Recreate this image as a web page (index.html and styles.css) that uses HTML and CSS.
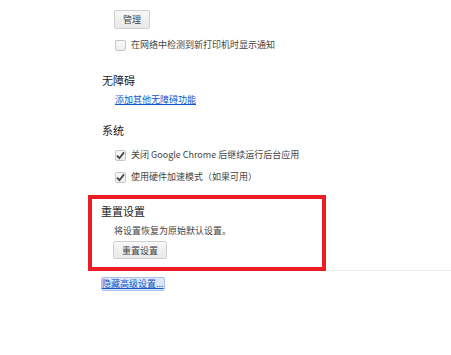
FILE: index.html
```html
<!DOCTYPE html>
<html>
<head>
  <meta charset="utf-8">
  <link rel="stylesheet" href="styles.css">
</head>
<body>
  <div class="page">
    <div class="section">
      <div class="items">
        <button class="btn">管理</button>
        <label class="check-row first-check">
          <span class="box"></span>
          <span>在网络中检测到新打印机时显示通知</span>
        </label>
      </div>
    </div>

    <div class="section">
      <h3 class="section-title a11y-title">无障碍</h3>
      <div class="items">
        <a href="#" class="link a11y-link">添加其他无障碍功能</a>
      </div>
    </div>

    <div class="section">
      <h3 class="section-title system-title">系统</h3>
      <div class="items">
        <label class="check-row row-2">
          <span class="box checked">
            <svg width="9" height="9" viewBox="0 0 9 9"><path d="M1 4.6 L3.4 7.2 L8 1.4" fill="none" stroke="#444" stroke-width="1.8"/></svg>
          </span>
          <span>关闭 Google Chrome 后继续运行后台应用</span>
        </label>
        <label class="check-row row-3">
          <span class="box checked">
            <svg width="9" height="9" viewBox="0 0 9 9"><path d="M1 4.6 L3.4 7.2 L8 1.4" fill="none" stroke="#444" stroke-width="1.8"/></svg>
          </span>
          <span>使用硬件加速模式（如果可用）</span>
        </label>
      </div>
    </div>

    <div class="reset-row">
      <div class="reset-box">
        <h3 class="section-title reset-title">重置设置</h3>
        <div class="items">
          <div class="reset-text">将设置恢复为原始默认设置。</div>
          <button class="btn reset-btn">重置设置</button>
        </div>
      </div>
      <div class="reset-line"></div>
    </div>

    <a href="#" class="link hide-link">隐藏高级设置...</a>
  </div>
</body>
</html>
```

FILE: styles.css
```css
body {
  margin: 0;
  background: #fff;
  font-family: "Noto Sans CJK SC", "Noto Sans", sans-serif;
  font-size: 9px;
  color: #444;
}
.page {
  padding: 10px 0 0 88px;
}
.section {
  padding-left: 14px;
}
.section-title {
  margin: 0;
  font-size: 11px;
  font-weight: normal;
  line-height: 16px;
  color: #222;
}
.items {
  padding-left: 13px;
  display: flex;
  flex-direction: column;
  align-items: flex-start;
}
.btn {
  height: 19px;
  padding: 0 8px;
  font-family: inherit;
  font-size: 9px;
  color: #444;
  background: linear-gradient(#f7f7f7, #e9e9e9);
  border: 1px solid #cfcfcf;
  border-radius: 2px;
  margin-left: -1px;
}
.check-row {
  display: flex;
  align-items: center;
  height: 16px;
  line-height: 16px;
  color: #444;
}
.first-check {
  margin-top: 8px;
}
.box {
  width: 11px;
  height: 11px;
  box-sizing: border-box;
  border: 1px solid #c6c6c6;
  border-radius: 2px;
  background: linear-gradient(#fafafa, #ececec);
  margin-right: 5px;
  display: flex;
  align-items: center;
  justify-content: center;
}
.a11y-title {
  margin-top: 19px;
}
.link {
  color: #15c;
  text-decoration: underline;
  line-height: 16px;
}
.a11y-link {
  margin-top: 4px;
}
.system-title {
  margin-top: 14px;
}
.row-2 {
  margin-top: 9px;
}
.row-3 {
  margin-top: 6px;
}
.reset-row {
  display: flex;
  margin-top: 10px;
}
.reset-box {
  width: 238px;
  box-sizing: border-box;
  border: 4px solid #ec1c24;
  padding: 4px 0 8px 9px;
}
.reset-line {
  flex: 1;
  border-bottom: 1px solid #ececec;
  margin-bottom: 0;
}
.reset-text {
  margin-top: 4px;
  line-height: 16px;
}
.reset-btn {
  margin-top: 2px;
  height: 18px;
}
.hide-link {
  display: inline-block;
  margin: 6px 0 0 13px;
  line-height: 12px;
  background: #dde7f8;
  border: 1px solid #a9c1ec;
  border-radius: 2px;
}
```
